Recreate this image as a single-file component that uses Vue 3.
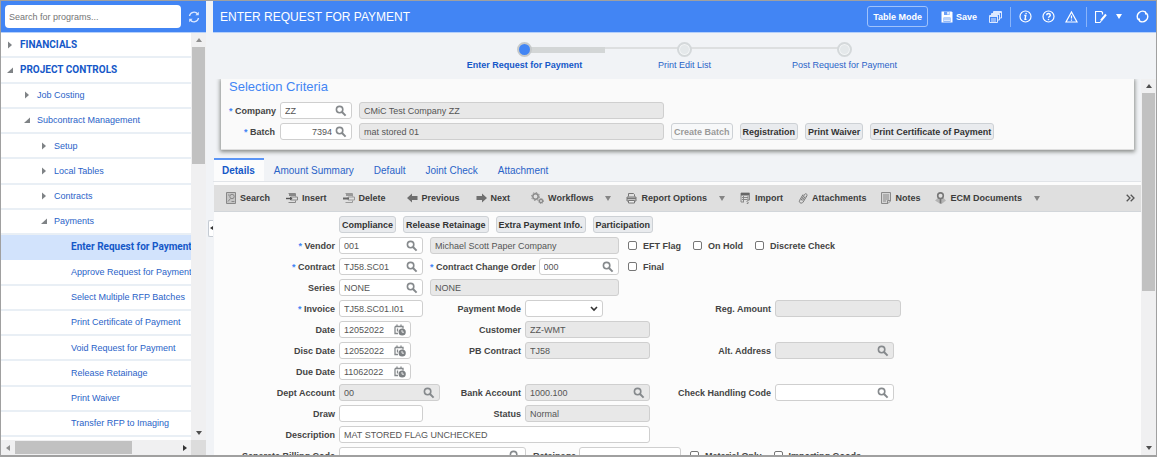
<script setup>
import { ref } from 'vue'

const programSearch = ref('')

const tree = [
  { label: 'FINANCIALS', level: 0, state: 'closed' },
  { label: 'PROJECT CONTROLS', level: 0, state: 'open' },
  { label: 'Job Costing', level: 1, state: 'closed' },
  { label: 'Subcontract Management', level: 1, state: 'open' },
  { label: 'Setup', level: 2, state: 'closed' },
  { label: 'Local Tables', level: 2, state: 'closed' },
  { label: 'Contracts', level: 2, state: 'closed' },
  { label: 'Payments', level: 2, state: 'open' },
  { label: 'Enter Request for Payment', level: 3, active: true },
  { label: 'Approve Request for Payment', level: 3 },
  { label: 'Select Multiple RFP Batches', level: 3 },
  { label: 'Print Certificate of Payment', level: 3 },
  { label: 'Void Request for Payment', level: 3 },
  { label: 'Release Retainage', level: 3 },
  { label: 'Print Waiver', level: 3 },
  { label: 'Transfer RFP to Imaging', level: 3 },
]

const steps = [
  { label: 'Enter Request for Payment', current: true },
  { label: 'Print Edit List' },
  { label: 'Post Request for Payment' },
]

const tabs = ['Details', 'Amount Summary', 'Default', 'Joint Check', 'Attachment']
const activeTab = ref('Details')

const form = ref({
  company: 'ZZ',
  companyName: 'CMiC Test Company ZZ',
  batch: '7394',
  batchName: 'mat stored 01',
  vendor: '001',
  vendorName: 'Michael Scott Paper Company',
  contract: 'TJ58.SC01',
  changeOrder: '000',
  series: 'NONE',
  seriesName: 'NONE',
  invoice: 'TJ58.SC01.I01',
  paymentMode: '',
  regAmount: '',
  date: '12052022',
  customer: 'ZZ-WMT',
  discDate: '12052022',
  pbContract: 'TJ58',
  altAddress: '',
  dueDate: '11062022',
  deptAccount: '00',
  bankAccount: '1000.100',
  checkHandling: '',
  draw: '',
  status: 'Normal',
  description: 'MAT STORED FLAG UNCHECKED',
  billingCode: '',
  retainage: '',
  eft: false,
  onHold: false,
  discrete: false,
  final: false,
  materialOnly: false,
  importing: false,
})
</script>

<template>
  <div class="app">
    <svg class="sprite" aria-hidden="true">
      <symbol id="i-lens" viewBox="0 0 12 12">
        <circle cx="4.6" cy="4.6" r="3.2" fill="none" stroke="#85898c" stroke-width="1.6" />
        <path d="M7 7l3.6 3.6" stroke="#85898c" stroke-width="2" fill="none" />
      </symbol>
      <symbol id="i-date" viewBox="0 0 12 12">
        <path d="M1 2.5h8v2M1 2.500v7h3M3 .5v2.500M7 .5v2.500M3.500 4.500v3" fill="none" stroke="#85898c" stroke-width="1.300" />
        <circle cx="8.200" cy="8" r="3.600" fill="#7d8184" />
        <path d="M8 6v2.200h2" fill="none" stroke="#fff" stroke-width=".8" />
      </symbol>
    </svg>

    <aside class="side">
      <div class="side-head">
        <input v-model="programSearch" class="program-search" type="text" placeholder="Search for programs..." aria-label="Search for programs" />
        <button class="icon-btn" type="button" aria-label="Refresh">
          <svg width="12" height="12" viewBox="0 0 12 12" fill="none" stroke="#dce8ff" stroke-width="1.400">
            <path d="M1.500 5a4.600 4.600 0 0 1 8.200-2M10.500 7a4.600 4.600 0 0 1-8.200 2" />
            <path d="M10.800 .8v3.400H7.400zM1.200 11.200V7.800h3.400z" fill="#dce8ff" stroke="none" />
          </svg>
        </button>
      </div>
      <div class="side-body">
        <nav class="tree">
          <a v-for="n in tree" :key="n.label" href="#" class="node" :class="['l' + n.level, { active: n.active }]">
            <svg v-if="n.state" class="twist" width="6" height="8" viewBox="0 0 6 8">
              <path v-if="n.state === 'closed'" d="M1 .5L5 4 1 7.500z" fill="#7f8386" />
              <path v-else d="M6 1.500V7H0z" fill="#7f8386" />
            </svg>
            <span>{{ n.label }}</span>
          </a>
        </nav>
        <div class="vbar" aria-hidden="true">
          <i class="up dim"></i>
          <div class="track"><div class="thumb tree-thumb"></div></div>
          <i class="down"></i>
        </div>
      </div>
      <div class="hbar" aria-hidden="true">
        <i class="left dim"></i>
        <div class="track"><div class="thumb"></div></div>
        <i class="right"></i>
        <div class="corner"></div>
      </div>
    </aside>

    <div class="splitter">
      <button type="button" class="grip" aria-label="Collapse menu"><i class="left"></i></button>
    </div>

    <main class="main">
      <header class="bar">
        <h1>ENTER REQUEST FOR PAYMENT</h1>
        <button class="mode" type="button">Table Mode</button>
        <button class="icon-btn save" type="button">
          <svg width="12" height="12" viewBox="0 0 12 12">
            <path d="M.5 .5h10l1 1v10H.5z" fill="#fff" />
            <path d="M3 .5h5.500v3.500H3zM2.500 6.500h7v4.500h-7z" fill="#6ba0f8" />
            <path d="M6.300 1h1.500v2.500H6.300zM3 7.500h6v1H3zM3 9.300h6v1H3z" fill="#fff" />
          </svg>
          Save
        </button>
        <button class="icon-btn" type="button" aria-label="Save all">
          <svg width="13" height="12" viewBox="0 0 13 12" stroke="#dce8ff" fill="#4285f4">
            <path d="M4.500 .5h8v6.500h-8z" />
            <path d="M2.500 2.500h8V9h-8z" />
            <path d="M.5 4.500h8v7h-8z" />
            <path d="M.5 5.500h8M4.500 1.500h8M2.500 3.500h8M2 8h5M2 10h5" />
          </svg>
        </button>
        <span class="sep"></span>
        <button class="icon-btn" type="button" aria-label="Information">
          <svg width="13" height="13" viewBox="0 0 13 13" fill="none" stroke="#fff">
            <circle cx="6.500" cy="6.500" r="5.500" stroke-width="1.200" />
            <path d="M5.300 5.500h1.500L6 9.300h1.500" stroke-width="1.300" />
            <circle cx="7.100" cy="3.500" r=".8" fill="#fff" stroke="none" />
          </svg>
        </button>
        <button class="icon-btn" type="button" aria-label="Help">
          <svg width="13" height="13" viewBox="0 0 13 13" fill="none" stroke="#fff">
            <circle cx="6.500" cy="6.500" r="5.500" stroke-width="1.200" />
            <path d="M4.700 5.200c0-2.200 3.600-2.200 3.600 0 0 1.300-1.800 1.300-1.800 2.600" stroke-width="1.400" />
            <circle cx="6.500" cy="9.500" r=".8" fill="#fff" stroke="none" />
          </svg>
        </button>
        <button class="icon-btn" type="button" aria-label="Warnings">
          <svg width="13" height="12" viewBox="0 0 13 12" fill="none" stroke="#fff">
            <path d="M6.500 1L12 11H1z" stroke-width="1.200" />
            <path d="M6.500 4.500v3M6.500 8.500v1.200" stroke-width="1.200" />
          </svg>
        </button>
        <span class="sep"></span>
        <button class="icon-btn edit" type="button" aria-label="Edit">
          <svg width="12" height="12" viewBox="0 0 12 12" fill="none" stroke="#fff">
            <path d="M7.500 3.500v-2l-1-1h-6v11h5" stroke-width="1.200" />
            <path d="M11 3.500L6 9.500" stroke-width="2" />
            <path d="M5 11.500l.3-2 1.500 1.200z" fill="#fff" stroke="none" />
          </svg>
          <i class="caret light"></i>
        </button>
        <button class="icon-btn" type="button" aria-label="Reload">
          <svg width="13" height="13" viewBox="0 0 13 13" fill="none" stroke="#fff">
            <path d="M9.500 2.200A5.200 5.200 0 0 0 2 9M3.500 10.800A5.200 5.200 0 0 0 11 4" stroke-width="1.400" />
            <path d="M.5 8.500h3.500v3.500zM12.500 4.500H9V1z" fill="#fff" stroke="none" />
          </svg>
        </button>
      </header>

      <ol class="steps">
        <li v-for="s in steps" :key="s.label" :class="{ current: s.current }">
          <span class="dot"></span>
          <a href="#">{{ s.label }}</a>
        </li>
      </ol>

      <div class="scroll">
        <div class="content">
          <section class="criteria">
            <h2>Selection Criteria</h2>
            <div class="crow">
              <label for="company" class="req">Company</label>
              <div class="field w-code"><input id="company" v-model="form.company" type="text" /><button type="button" aria-label="Find company"><svg><use href="#i-lens" /></svg></button></div>
              <input v-model="form.companyName" class="field ro w-name" type="text" readonly aria-label="Company name" />
            </div>
            <div class="crow">
              <label for="batch" class="req">Batch</label>
              <div class="field w-code num"><input id="batch" v-model="form.batch" type="text" /><button type="button" aria-label="Find batch"><svg><use href="#i-lens" /></svg></button></div>
              <input v-model="form.batchName" class="field ro w-name" type="text" readonly aria-label="Batch name" />
              <button class="btn" type="button" disabled>Create Batch</button>
              <button class="btn" type="button">Registration</button>
              <button class="btn" type="button">Print Waiver</button>
              <button class="btn" type="button">Print Certificate of Payment</button>
            </div>
          </section>

          <div class="tabs" role="tablist">
            <button v-for="t in tabs" :key="t" type="button" role="tab" :aria-selected="t === activeTab" :class="{ on: t === activeTab }" @click="activeTab = t">{{ t }}</button>
          </div>

          <section class="panel">
            <div class="toolbar">
              <div class="group">
                <button type="button">
                  <svg width="10" height="12" viewBox="0 0 10 12" fill="none" stroke="#888"><path d="M.5 .5h9v11h-9z" fill="#c6c6c6" /><circle cx="6" cy="4.500" r="2.200" /><path d="M4.500 6.500L2 9.500M2 3h1.500M5.500 9.500h3" /></svg>
                  Search
                </button>
                <button type="button">
                  <svg width="12" height="12" viewBox="0 0 12 12" fill="none" stroke="#888"><path d="M2.500 1.500h7v3M2.500 10.500h7v-2" /><path d="M3 2h6v2H3z" fill="#888" stroke="none" /><path d="M5 5h6.500v3H5z" /><path d="M0 6.500h5" stroke="#555" stroke-width="1.400" /><path d="M4 4.500l2.500 2L4 8.500z" fill="#555" stroke="none" /></svg>
                  Insert
                </button>
                <button type="button">
                  <svg width="12" height="12" viewBox="0 0 12 12" fill="none" stroke="#999"><path d="M2.500 1.500h7v3M2.500 10.500h7v-2" /><path d="M3 2h6v2H3z" fill="#999" stroke="none" /><path d="M5 5h6.500v3H5z" /><path d="M0 6.500h6" stroke="#666" stroke-width="2" /></svg>
                  Delete
                </button>
              </div>
              <div class="group">
                <button type="button">
                  <svg width="11" height="10" viewBox="0 0 11 10"><path d="M0 5l5-4.500V3h5.500v4H5v2.500z" fill="#6f6f6f" /></svg>
                  Previous
                </button>
                <button type="button">
                  <svg width="11" height="10" viewBox="0 0 11 10"><path d="M11 5L6 .5V3H.5v4H6v2.500z" fill="#6f6f6f" /></svg>
                  Next
                </button>
              </div>
              <div class="group actions">
                <button type="button">
                  <svg width="13" height="12" viewBox="0 0 13 12" fill="none" stroke="#8a8a8a"><circle cx="4.500" cy="4.500" r="2.700" stroke-width="1.500" /><circle cx="4.500" cy="4.500" r="4" stroke-dasharray="1.500 1.600" /><circle cx="10" cy="9" r="1.600" stroke-width="1.300" /><circle cx="10" cy="9" r="2.500" stroke-dasharray="1 1" /></svg>
                  Workflows
                  <i class="caret"></i>
                </button>
                <button type="button">
                  <svg width="11" height="12" viewBox="0 0 11 12" fill="none" stroke="#777"><path d="M2.500 4.500v-3h5l1 1v2M1 5h9v4H1z" /><path d="M2.500 8.500v2.500h6V8.500z" fill="#eee" /><path d="M1 6.500h9" stroke-width="1.500" /></svg>
                  Report Options
                  <i class="caret"></i>
                </button>
                <button type="button">
                  <svg width="11" height="12" viewBox="0 0 11 12" fill="none" stroke="#888"><path d="M1 1h8.500v7H7M1 1v9h3" /><path d="M1 1h8v2.500H1z" fill="#666" stroke="none" /><path d="M3.500 4v6M2 5.500h6M2 7.500h5M6.500 9l2 2-2 1M8 4v5" /></svg>
                  Import
                </button>
                <button type="button">
                  <svg width="10" height="12" viewBox="0 0 10 12" fill="none" stroke="#777"><path d="M3 8.500l3.500-6C7.500 1 9.700 2 8.800 4L5 10.200C3.800 12 .5 10.800 1.500 8.500L5 2.500M4.500 8.500L7 4.500" /></svg>
                  Attachments
                </button>
                <button type="button">
                  <svg width="10" height="12" viewBox="0 0 10 12" fill="none" stroke="#8a8a8a"><path d="M.5 .5h9V9L7 11.500H.5z" fill="#d4d4d4" /><path d="M2 3h6M2 5h6M2 7h6M2 9h3M9 8.500H6.500V11" /></svg>
                  Notes
                </button>
                <button type="button">
                  <svg width="11" height="12" viewBox="0 0 11 12" fill="none" stroke="#777"><path d="M0 8.500L3 6h5.500L11 8.500 6.500 12 4 11z" fill="#b4b4b4" stroke="none" /><circle cx="5.500" cy="3.700" r="2.800" stroke-width="1.600" /><path d="M5.500 6.500v5" stroke-width="1.600" /></svg>
                  ECM Documents
                  <i class="caret"></i>
                </button>
              </div>
              <button type="button" class="more" aria-label="More">
                <svg width="9" height="8" viewBox="0 0 9 8" fill="none" stroke="#555" stroke-width="1.300"><path d="M.7 .7L4 4 .7 7.300M4.700 .7L8 4 4.700 7.300" /></svg>
              </button>
            </div>

            <form class="form" @submit.prevent>
              <div class="frow">
                <div class="line">
                  <button class="btn" type="button">Compliance</button>
                  <button class="btn" type="button">Release Retainage</button>
                  <button class="btn" type="button">Extra Payment Info.</button>
                  <button class="btn" type="button">Participation</button>
                </div>
              </div>
              <div class="frow">
                <label for="vendor" class="req">Vendor</label>
                <div class="line">
                  <div class="field w-key"><input id="vendor" v-model="form.vendor" type="text" /><button type="button" aria-label="Find vendor"><svg><use href="#i-lens" /></svg></button></div>
                  <input v-model="form.vendorName" class="field ro w-desc" type="text" readonly aria-label="Vendor name" />
                  <div class="checks">
                    <label><input v-model="form.eft" type="checkbox" />EFT Flag</label>
                    <label><input v-model="form.onHold" type="checkbox" />On Hold</label>
                    <label><input v-model="form.discrete" type="checkbox" />Discrete Check</label>
                  </div>
                </div>
              </div>
              <div class="frow">
                <label for="contract" class="req">Contract</label>
                <div class="line">
                  <div class="field w-key"><input id="contract" v-model="form.contract" type="text" /><button type="button" aria-label="Find contract"><svg><use href="#i-lens" /></svg></button></div>
                  <div class="w-desc pair">
                    <label for="cco" class="req">Contract Change Order</label>
                    <div class="field"><input id="cco" v-model="form.changeOrder" type="text" /><button type="button" aria-label="Find change order"><svg><use href="#i-lens" /></svg></button></div>
                  </div>
                  <div class="checks">
                    <label><input v-model="form.final" type="checkbox" />Final</label>
                  </div>
                </div>
              </div>
              <div class="frow">
                <label for="series">Series</label>
                <div class="line">
                  <div class="field w-key"><input id="series" v-model="form.series" type="text" /><button type="button" aria-label="Find series"><svg><use href="#i-lens" /></svg></button></div>
                  <input v-model="form.seriesName" class="field ro w-desc" type="text" readonly aria-label="Series name" />
                </div>
              </div>
              <div class="frow">
                <label for="invoice" class="req">Invoice</label>
                <input id="invoice" v-model="form.invoice" class="field w-key" type="text" />
                <label for="mode">Payment Mode</label>
                <div class="field w-mode">
                  <select id="mode" v-model="form.paymentMode"><option value=""></option><option>Check</option></select>
                  <svg width="8" height="6" viewBox="0 0 8 6" aria-hidden="true"><path d="M1 1l3 3 3-3" fill="none" stroke="#333" stroke-width="1.600" /></svg>
                </div>
                <label for="reg">Reg. Amount</label>
                <input id="reg" v-model="form.regAmount" class="field ro" type="text" readonly />
              </div>
              <div class="frow">
                <label for="date">Date</label>
                <div class="field w-date"><input id="date" v-model="form.date" type="text" /><button type="button" aria-label="Pick date"><svg><use href="#i-date" /></svg></button></div>
                <label for="customer">Customer</label>
                <input id="customer" v-model="form.customer" class="field ro" type="text" readonly />
              </div>
              <div class="frow">
                <label for="disc">Disc Date</label>
                <div class="field w-date"><input id="disc" v-model="form.discDate" type="text" /><button type="button" aria-label="Pick discount date"><svg><use href="#i-date" /></svg></button></div>
                <label for="pb">PB Contract</label>
                <input id="pb" v-model="form.pbContract" class="field ro" type="text" readonly />
                <label for="alt">Alt. Address</label>
                <div class="field ro w-find"><input id="alt" v-model="form.altAddress" type="text" readonly /><button type="button" aria-label="Find address"><svg><use href="#i-lens" /></svg></button></div>
              </div>
              <div class="frow">
                <label for="due">Due Date</label>
                <div class="field w-date"><input id="due" v-model="form.dueDate" type="text" /><button type="button" aria-label="Pick due date"><svg><use href="#i-date" /></svg></button></div>
              </div>
              <div class="frow">
                <label for="dept">Dept Account</label>
                <div class="field ro"><input id="dept" v-model="form.deptAccount" type="text" readonly /><button type="button" aria-label="Find department account"><svg><use href="#i-lens" /></svg></button></div>
                <label for="bank">Bank Account</label>
                <div class="field ro"><input id="bank" v-model="form.bankAccount" type="text" readonly /><button type="button" aria-label="Find bank account"><svg><use href="#i-lens" /></svg></button></div>
                <label for="handling">Check Handling Code</label>
                <div class="field w-find"><input id="handling" v-model="form.checkHandling" type="text" /><button type="button" aria-label="Find handling code"><svg><use href="#i-lens" /></svg></button></div>
              </div>
              <div class="frow">
                <label for="draw">Draw</label>
                <input id="draw" v-model="form.draw" class="field w-key" type="text" />
                <label for="status">Status</label>
                <input id="status" v-model="form.status" class="field ro" type="text" readonly />
              </div>
              <div class="frow">
                <label for="descr">Description</label>
                <input id="descr" v-model="form.description" class="field span3" type="text" />
              </div>
              <div class="frow">
                <label for="billing">Separate Billing Code</label>
                <div class="line">
                  <div class="field w-bill"><input id="billing" v-model="form.billingCode" type="text" /><button type="button" aria-label="Find billing code"><svg><use href="#i-lens" /></svg></button></div>
                  <div class="pair">
                    <label for="ret">Retainage</label>
                    <input id="ret" v-model="form.retainage" class="field w-ret" type="text" />
                  </div>
                  <div class="checks">
                    <label><input v-model="form.materialOnly" type="checkbox" />Material Only</label>
                    <label><input v-model="form.importing" type="checkbox" />Importing Goods</label>
                  </div>
                </div>
              </div>
            </form>
          </section>
        </div>
        <div class="vbar" aria-hidden="true">
          <i class="up"></i>
          <div class="track"><div class="thumb page-thumb"></div></div>
          <i class="down"></i>
        </div>
      </div>
    </main>
  </div>
</template>

<style>
body {
  margin: 0;
}
</style>

<style scoped>
* {
  box-sizing: border-box;
}
.app {
  display: flex;
  height: 100vh;
  overflow: hidden;
  border: 1px solid #a0a0a0;
  border-bottom-width: 2px;
  background: #f1f3f6;
  color: #444;
  font: 9px/12px "Liberation Sans", Arial, sans-serif;
}
.sprite {
  position: absolute;
  width: 0;
  height: 0;
}
button,
input,
select {
  margin: 0;
  padding: 0;
  border: 0;
  background: none;
  font: inherit;
  color: inherit;
}
input:focus,
select:focus {
  outline: none;
}
a {
  color: #2a63c8;
  text-decoration: none;
}
svg {
  display: block;
  flex: none;
}

/* program menu */
.side {
  flex: none;
  display: flex;
  flex-direction: column;
  width: 205px;
  background: #fff;
}
.side-head {
  display: flex;
  align-items: center;
  gap: 7px;
  height: 32px;
  padding: 0 4px;
  background: #4285f4;
  border-bottom: 1px solid #b5d0fb;
}
.program-search {
  width: 176px;
  height: 23px;
  padding: 0 4px;
  border-radius: 4px;
  background: #fff;
}
.program-search::placeholder {
  color: #757575;
  opacity: 1;
}
.side-body {
  flex: 1;
  display: flex;
  min-height: 0;
}
.tree {
  flex: 1;
  min-width: 0;
  display: grid;
  grid-auto-rows: minmax(25px, 1fr);
  padding-bottom: 3px;
  overflow: hidden;
}
.node {
  display: flex;
  align-items: center;
  gap: 7px;
  overflow: hidden;
  border-bottom: 2px solid #e9eff5;
  white-space: nowrap;
}
.l0 {
  padding-left: 6px;
}
.l1 {
  padding-left: 23px;
}
.l2 {
  padding-left: 40px;
}
.l3 {
  padding-left: 70px;
}
.l0,
.active {
  color: #1558c8;
  font-family: Roboto, "Liberation Sans", sans-serif;
  font-size: 10px;
  font-weight: bold;
}
.active {
  background: #d2e3fc;
  border-color: #d2e3fc;
}

/* scroll bars */
.vbar {
  flex: none;
  display: flex;
  flex-direction: column;
  align-items: center;
  width: 15px;
  padding: 5px 0;
  gap: 5px;
  background: #f0f0f1;
}
.track {
  flex: 1;
  align-self: stretch;
  min-width: 0;
}
.vbar .thumb {
  width: 13px;
  margin: 0 auto;
  background: #c1c1c1;
}
.tree-thumb {
  height: 31%;
}
.page-thumb {
  height: 57%;
}
.hbar {
  flex: none;
  display: flex;
  align-items: center;
  height: 15px;
  padding-left: 5px;
  background: #f0f0f1;
}
.hbar .track {
  align-self: center;
  margin: 0 6px 0 5px;
}
.hbar .thumb {
  width: 72%;
  height: 13px;
  background: #c1c1c1;
}
.hbar .corner {
  width: 15px;
  height: 15px;
  margin-left: 4px;
  background: #dcdcdc;
}
.up,
.down,
.left,
.right,
.caret {
  flex: none;
  width: 0;
  height: 0;
  border: 3px solid transparent;
}
.up {
  border-top-width: 0;
  border-bottom: 4px solid #505050;
}
.down {
  border-bottom-width: 0;
  border-top: 4px solid #505050;
}
.left {
  border-left-width: 0;
  border-right: 4px solid #333;
}
.right {
  border-right-width: 0;
  border-left: 4px solid #333;
}
.up.dim {
  border-bottom-color: #8f8f8f;
}
.left.dim {
  border-right-color: #8f8f8f;
}
.caret {
  border-bottom-width: 0;
  border-top: 5px solid #858585;
}
.caret.light {
  border-top-color: #fff;
}

.splitter {
  flex: none;
  display: flex;
  align-items: center;
  justify-content: flex-end;
  width: 7px;
}
.grip {
  display: flex;
  align-items: center;
  justify-content: center;
  width: 5px;
  height: 17px;
  border: 1px solid #c5cbd3;
  border-right: 0;
  border-radius: 2px 0 0 2px;
  background: #fff;
}
.grip .left {
  border-width: 2px;
  border-left-width: 0;
  border-right-width: 3px;
}

/* title bar */
.main {
  flex: 1;
  display: flex;
  flex-direction: column;
  min-width: 0;
}
.bar {
  flex: none;
  display: flex;
  align-items: center;
  gap: 10px;
  height: 32px;
  padding: 0 7px;
  background: #4285f4;
  border-bottom: 1px solid #b5d0fb;
  color: #fff;
}
h1 {
  flex: 1;
  margin: 0;
  font-size: 12px;
  font-weight: normal;
  white-space: nowrap;
}
.mode {
  height: 21px;
  margin-right: 3px;
  padding: 0 5px;
  border: 1px solid #9fc2fb;
  border-radius: 3px;
  font-weight: bold;
  white-space: nowrap;
}
.icon-btn {
  flex: none;
  display: flex;
  align-items: center;
  gap: 3px;
  color: #fff;
  font-weight: bold;
}
.save {
  margin-right: 2px;
}
.edit {
  gap: 9px;
  margin-right: 4px;
}
.sep {
  width: 1px;
  height: 20px;
  margin: 0 -2px;
  background: #8ab4fa;
}

/* train of steps */
.steps {
  flex: none;
  display: flex;
  justify-content: center;
  height: 46px;
  margin: 0;
  padding: 9px 0 0;
  list-style: none;
}
.steps li {
  position: relative;
  display: flex;
  flex-direction: column;
  align-items: center;
  gap: 2px;
  width: 160px;
}
.steps li:not(:last-child)::before,
.steps .current::after {
  content: "";
  position: absolute;
  top: 5px;
  left: 50%;
  width: 100%;
  height: 2px;
  background: #dddfe0;
}
.steps .current::after {
  width: 50%;
  height: 6px;
  background: #d3d6d6;
}
.dot {
  z-index: 1;
  width: 15px;
  height: 15px;
  border: 2px solid #d4d8da;
  border-radius: 50%;
  background: #e4e8ea;
  box-shadow: inset 0 0 0 1px #f3f5f6;
}
.current .dot {
  border-color: #c6c9ca;
  background: #4285f4;
  box-shadow: none;
}
.current a {
  font-weight: bold;
  color: #1558c8;
}

/* page body */
.scroll {
  flex: 1;
  display: flex;
  min-height: 0;
}
.content {
  flex: 1;
  min-width: 0;
  overflow: hidden;
}
.criteria {
  display: flex;
  flex-direction: column;
  gap: 4px;
  margin: 0 7px 8px 8px;
  padding: 0 8px 9px;
  border-bottom: 1px solid #dedede;
  background: #fafafa;
  box-shadow: 0 1px 4px 1px #8a8d8a;
}
h2 {
  margin: 0 0 3px;
  font-size: 13px;
  line-height: 16px;
  font-weight: normal;
  color: #4285f4;
}
.crow {
  display: flex;
  align-items: center;
  gap: 7px;
}
.crow > label {
  width: 46px;
  margin-right: -2px;
}
label {
  font-weight: bold;
  text-align: right;
  white-space: nowrap;
}
.req::before {
  content: "* ";
  color: #4285f4;
}
.field {
  display: flex;
  align-items: center;
  width: 100%;
  min-width: 0;
  height: 17px;
  padding: 0 4px;
  border: 1px solid #cfcfcf;
  border-radius: 3px;
  background: #fff;
  color: #555;
}
.field input {
  flex: 1;
  min-width: 0;
}
.field button {
  width: 12px;
  height: 12px;
}
.field button svg {
  width: 12px;
  height: 12px;
}
.num input {
  text-align: right;
  padding-right: 3px;
}
.ro {
  background: #e8e8e8;
}
.w-code {
  width: 72px;
}
.w-name {
  width: 305px;
}
.w-key {
  width: 84px;
}
.w-desc {
  width: 189px;
}
.w-date {
  width: 72px;
}
.w-mode {
  width: 78px;
}
.w-find {
  width: 119px;
}
.w-bill {
  width: 187px;
}
.w-ret {
  width: 102px;
}
.btn {
  height: 17px;
  padding: 0 2px;
  border: 1px solid #cdd1d5;
  border-radius: 3px;
  background: #e9ebee;
  color: #333;
  font-weight: bold;
  white-space: nowrap;
}
.btn:disabled {
  background: #f7f8f9;
  color: #9a9a9a;
}

.tabs {
  display: flex;
  height: 24px;
  padding-left: 1px;
  border-bottom: 1px solid #e1e4e8;
}
.tabs button {
  padding: 0 10px;
  border-top: 2px solid transparent;
  color: #2a63c8;
  font-size: 10px;
  white-space: nowrap;
}
.tabs .on {
  padding: 0 9px 0 8px;
  border-top-color: #5b95f5;
  background: #fcfcfc;
  color: #1558c8;
  font-weight: bold;
}
.panel {
  margin-left: 1px;
  padding-top: 3px;
  background: #fcfcfc;
}
.toolbar {
  display: flex;
  align-items: center;
  height: 27px;
  padding: 0 6px 0 12px;
  border-bottom: 1px solid #d2d6da;
  background: #dfdfdf;
}
.group {
  display: flex;
  gap: 16px;
  margin-right: 21px;
}
.actions {
  gap: 15px;
}
.toolbar button {
  display: flex;
  align-items: center;
  gap: 4px;
  color: #3c3c3c;
  font-weight: bold;
  white-space: nowrap;
}
.toolbar .caret {
  margin-left: 8px;
}
.toolbar .more {
  margin-left: auto;
}

.form {
  display: flex;
  flex-direction: column;
  gap: 4px;
  padding-top: 4px;
}
.frow {
  display: grid;
  grid-template-columns: 121px 101px 77px 125px 117px 126px;
  align-items: center;
  column-gap: 4px;
}
.line {
  grid-column: 2 / -1;
  display: flex;
  align-items: center;
  gap: 7px;
}
.span3 {
  grid-column: 2 / 5;
}
.w-mode select {
  flex: 1;
  min-width: 0;
  appearance: none;
}
.pair {
  display: flex;
  align-items: center;
  gap: 3px;
}
.pair .field:not(.w-ret) {
  flex: 1;
}
.checks {
  display: flex;
  gap: 12px;
  padding-left: 2px;
}
.checks label {
  display: flex;
  align-items: center;
  gap: 6px;
}
.checks input {
  appearance: none;
  width: 9px;
  height: 9px;
  border: 1px solid #767676;
  border-radius: 2px;
  background: #fff;
}
.checks input:checked {
  background: #4285f4;
}
</style>
